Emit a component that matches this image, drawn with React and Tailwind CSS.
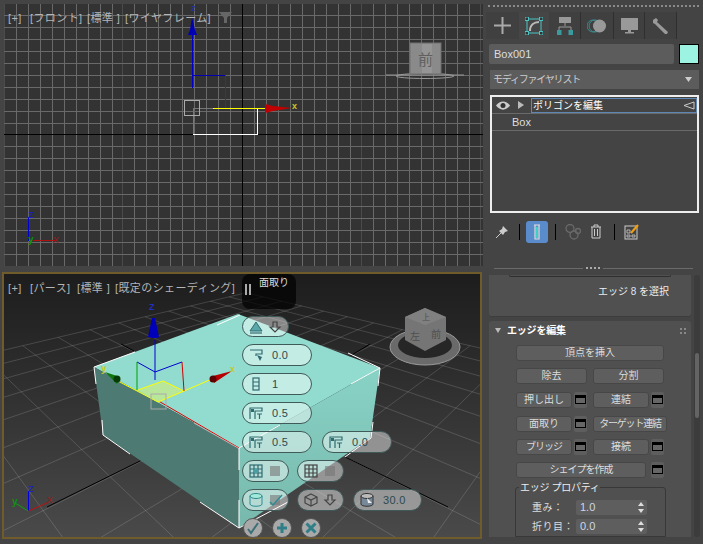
import React from "react";

const CJK = { fontFamily: '"Liberation Sans","Noto Sans CJK JP",sans-serif' };

function Grid() {
  const bases = [4, 122.5, 242, 361, 480];
  const vs = [];
  bases.forEach((b) => {
    for (let j = 0; j < 10; j++) vs.push({ x: Math.floor(b + 12 * j) + 0.5, major: j === 0 });
  });
  const hs = [];
  [15, 134, 254].forEach((b) => {
    for (let j = 0; j < 10; j++) hs.push(b + 12 * j + 0.5);
  });
  return (
    <g shapeRendering="crispEdges">
      {vs.filter((v) => v.x < 484).map((v, i) => (
        <line key={i} x1={v.x} x2={v.x} y1="4" y2="266" stroke={v.major ? "#4b4b4b" : "#696969"} />
      ))}
      {hs.filter((y) => y < 267).map((y, i) => (
        <line key={i} x1="4" x2="484" y1={y} y2={y} stroke="#696969" />
      ))}
      <line x1="242.5" x2="242.5" y1="4" y2="266" stroke="#000" />
      <line x1="4" x2="484" y1="134.5" y2="134.5" stroke="#000" />
    </g>
  );
}

function TopView() {
  return (
    <svg className="block w-full h-full" viewBox="4 4 479 262">
      <Grid />
      <g shapeRendering="crispEdges" fill="none">
        <path d="M193 108H213M193.5 108V134" stroke="#777" />
        <path d="M193 134.5H257.5V108" stroke="#fff" />
        <path d="M213 108.500H265" stroke="#ff0" strokeWidth="1" />
        <path d="M192.500 88V30" stroke="#0000c8" strokeWidth="1" />
        <path d="M193 75.500H225.500" stroke="#0000b0" />
        <path d="M225.500 75V108" stroke="#a01010" />
        <rect x="184.500" y="100.500" width="15" height="15" stroke="#aaa" />
      </g>
      <path d="M192 17L190 30 188 35H197L195 30Z" fill="#0000b4" />
      <text x="191" y="11" fontSize="9" fill="#2030c0" style={CJK}>z</text>
      <path d="M265 104V113L273 111 292 108 273 106Z" fill="#c00000" />
      <text x="292" y="109" fontSize="9" fontWeight="700" fill="#c8c820" style={CJK}>x</text>
      <g>
        <path d="M386 75H464" stroke="#999" strokeWidth="1" />
        <ellipse cx="425" cy="76" rx="29" ry="2.500" fill="none" stroke="#999" />
        <rect x="410" y="43" width="31" height="31" fill="#8a8a8a" stroke="#707070" />
        <rect x="422" y="44" width="10" height="29" fill="#fff" opacity=".1" />
        <text x="425.500" y="65" fontSize="15" textAnchor="middle" fill="#606060" style={CJK}>前</text>
      </g>
      <path d="M28.500 217V240H55" fill="none" stroke="#0000d0" shapeRendering="crispEdges" />
      <path d="M29 240.500H55" stroke="#b01010" shapeRendering="crispEdges" />
      <text x="28" y="218" fontSize="9" fill="#1020d0" style={CJK}>Z</text>
      <text x="53" y="243" fontSize="9" fill="#a01818" style={CJK}>X</text>
      <text x="28" y="243" fontSize="10" fontWeight="700" fill="#109010" style={CJK}>y</text>
    </svg>
  );
}

function perspLines() {
  const O = [247, 408], V1 = [680, 190], V2 = [-190, 190], k = 0.08;
  const P = (u, v) => {
    const w = 1 + u * k + v * k;
    return [
      (O[0] + u * k * V1[0] + v * k * V2[0]) / w,
      (O[1] + u * k * V1[1] + v * k * V2[1]) / w,
    ];
  };
  const out = [];
  const N = 7;
  const L = -5;
  for (let a = L; a <= N; a++) {
    out.push([P(a, L), P(a, N)]);
    out.push([P(L, a), P(N, a)]);
  }
  return out;
}

function PerspView() {
  const wire = "#fff";
  return (
    <svg className="block w-full h-full" viewBox="4 274 476 263">
      <defs>
        <linearGradient id="rf" x1="0" y1="0" x2="0" y2="1">
          <stop offset="0" stopColor="#88d3c6" />
          <stop offset="1" stopColor="#78b8ac" />
        </linearGradient>
      </defs>
      {perspLines().map(([a, b], i) => (
        <line key={i} x1={a[0]} y1={a[1]} x2={b[0]} y2={b[1]} stroke="#fff" strokeOpacity=".17" strokeWidth=".9" />
      ))}
      <path d="M47 507L142 460M347 358L370 344M121 344L134 351M345 457L448 507" stroke="#000" strokeWidth="1" fill="none" />
      <polygon points="94,367 238,314 380,368 239,448" fill="#92dccf" />
      <polygon points="239,448 380,368 370,438 239,528" fill="url(#rf)" />
      <polygon points="94,367 239,448 239,528 103,435" fill="#4d7a72" />
      <path d="M150 396L239 448" stroke="#e00000" strokeWidth="1" fill="none" />
      <path d="M194 423L239 448.500" stroke="#fff" strokeWidth=".8" fill="none" opacity=".7" />
      <g stroke={wire} strokeWidth="1" fill="none">
        <path d="M96 384L94 367L135 352" />
        <path d="M217 325L240 315" />
        <path d="M348 353L380 368L351 384" />
        <path d="M380 368L378 386" />
        <path d="M280 425L239 448" />
        <path d="M239 448V470M239 500V528" />
        <path d="M373 422L371 438L345 457" />
        <path d="M288 502L239 528L200 502" />
        <path d="M102 420L103 435L130 454" />
      </g>
      <path d="M138 390L163 381L184 391L158 402Z" fill="#b8e69a" />
      <g fill="none" strokeWidth="1">
        <path d="M118 381L158 402L184 391L212 379M138 390L163 381L184 391" stroke="#ffff00" />
        <path d="M137 362L155 372L182 362" stroke="#0000d0" />
        <path d="M155 372V340M155 372V380" stroke="#0000d0" />
        <path d="M137 362V390" stroke="#00a000" />
        <path d="M182 362L184 391" stroke="#d00000" />
        <rect x="151" y="394" width="15" height="15" stroke="#aaa" />
      </g>
      <path d="M152 318L148 337L152 338H157L159 337L155 318Z" fill="#0000b8" />
      <text x="149" y="310" fontSize="9" fontWeight="700" fill="#2030c0" style={CJK}>Z</text>
      <path d="M105 372L120 377L117 384Z" fill="#0b7a0b" />
      <circle cx="117" cy="379" r="3.500" fill="#063d06" />
      <text x="101" y="372" fontSize="10" fontWeight="700" fill="#c8c820" style={CJK}>y</text>
      <path d="M232 371L213 376L214 383Z" fill="#b80000" />
      <circle cx="213" cy="379" r="3.500" fill="#5a0000" />
      <text x="230" y="372" fontSize="9" fontWeight="700" fill="#c8c820" style={CJK}>x</text>
      <g>
        <ellipse cx="425" cy="347" rx="35" ry="18" fill="#6a6a6a" stroke="#9a9a9a" />
        <ellipse cx="425" cy="345" rx="27" ry="13" fill="#262626" />
        <path d="M425 308L446 317V340L425 351L405 340V317Z" fill="#757575" />
        <path d="M425 308L446 317L425 325L405 317Z" fill="#808080" />
        <text x="415" y="340" fontSize="10" textAnchor="middle" fill="#4f4f4f" style={CJK}>左</text>
        <text x="436" y="338" fontSize="10" textAnchor="middle" fill="#4f4f4f" style={CJK}>前</text>
        <text x="426" y="320" fontSize="8" textAnchor="middle" fill="#4f4f4f" style={CJK}>上</text>
      </g>
      <path d="M28.500 511V491" stroke="#0000e0" />
      <path d="M28.500 511L15 503" stroke="#10a010" />
      <path d="M28.500 511L47 503" stroke="#c01010" />
      <text x="28" y="492" fontSize="9" fill="#1020d0" style={CJK}>Z</text>
      <text x="12" y="505" fontSize="10" fontWeight="700" fill="#109010" style={CJK}>y</text>
      <text x="47" y="503" fontSize="9" fill="#a01818" style={CJK}>X</text>
    </svg>
  );
}

const T = "#2f6a70";
function CIcon({ kind }) {
  const c = { fill: "none", stroke: T, strokeWidth: 1.2 };
  const map = {
    house: <><path d="M2 12L8 3L14 12Z" fill="#5aa7a9" stroke={T} /><path d="M2 14H14" {...c} /></>,
    arrow: <path d="M6 3H10V8H13L8 13L3 8H6Z" {...c} stroke="#444" />,
    seg: <><path d="M2 3H14V7H8V9" {...c} /><path d="M9 8L14 10L12 14Z" fill={T} /></>,
    bar: <><rect x="5" y="2" width="6" height="12" {...c} /><path d="M5 6H11M5 10H11" {...c} /></>,
    amt: <><path d="M2 14V3H14V6H7V14" {...c} /><rect x="3" y="4" width="3" height="3" fill={T} /><path d="M9 9H14M11.500 9V14" {...c} /></>,
    g1: <><rect x="2" y="2" width="12" height="12" {...c} /><path d="M6 2V14M10 2V14M2 6H14M2 10H14" {...c} /><rect x="6" y="6" width="4" height="4" fill="#48a0a6" /></>,
    g2: <><rect x="2" y="2" width="12" height="12" {...c} stroke="#444" /><path d="M6 2V14M10 2V14M2 6H14M2 10H14" {...c} stroke="#444" /></>,
    square: <rect x="3" y="3" width="10" height="10" fill="#777" opacity=".6" />,
    cyl: <><ellipse cx="8" cy="4" rx="6" ry="2.500" fill="#8fd" fillOpacity=".4" stroke="#2e8a92" /><path d="M2 4V12C2 15 14 15 14 12V4" fill="none" stroke="#2e8a92" /></>,
    check: <><rect x="3" y="3" width="10" height="10" fill="#777" opacity=".6" /><path d="M3 10L6 13L15 3" fill="none" stroke="#2e8a92" strokeWidth="1.500" /></>,
    cube: <><path d="M8 2L14 5V11L8 14L2 11V5Z" {...c} stroke="#444" /><path d="M2 5L8 8L14 5M8 8V14" {...c} stroke="#444" /></>,
    twist: <><path d="M2 4V12C2 15 14 15 14 12V4" fill="#789" stroke="#333" /><ellipse cx="8" cy="4" rx="6" ry="2.500" fill="#bbb" stroke="#333" /><path d="M8 6L13 11L9 11Z" fill="#eee" /></>,
  };
  return <svg width="16" height="16" viewBox="0 0 16 16" className="shrink-0">{map[kind]}</svg>;
}

function Pill({ a, b, text, w }) {
  return (
    <div className={`flex items-center ${w} h-full rounded-[11px] border border-[#3f5a58] bg-white/45 pl-[5px] ${b ? "gap-[3px]" : "gap-[8px]"} text-[11px] tracking-[0.3px] text-[#2c4a50]`} style={CJK}>
      <CIcon kind={a} />
      {b ? <CIcon kind={b} /> : null}
      {text ? <span>{text}</span> : null}
    </div>
  );
}

function Round({ children }) {
  return (
    <div className="w-[20px] h-[20px] rounded-full border border-[#555] bg-[#a9a9a9] flex items-center justify-center">
      <svg width="14" height="14" viewBox="0 0 14 14">{children}</svg>
    </div>
  );
}

function Caddy() {
  return (
    <div className="absolute left-[238px] top-0 flex flex-col gap-[7px]">
      <div className="w-[54px] h-[35px] rounded-lg bg-black/70 flex items-start pl-[3px] pt-[2px] gap-[3px]">
        <div className="flex gap-[2px] mt-[8px]">
          <div className="w-[2px] h-[11px] bg-[#aaa]" />
          <div className="w-[2px] h-[11px] bg-[#aaa]" />
        </div>
        <span className="text-[10px] leading-[14px] text-[#ddd] ml-[5px] whitespace-nowrap" style={CJK}>面取り</span>
      </div>
      <div className="h-[21px]"><Pill a="house" b="arrow" w="w-[47px]" /></div>
      <div className="h-[22px]"><Pill a="seg" text="0.0" w="w-[70px]" /></div>
      <div className="h-[22px]"><Pill a="bar" text="1" w="w-[70px]" /></div>
      <div className="h-[22px]"><Pill a="amt" text="0.5" w="w-[70px]" /></div>
      <div className="h-[22px] flex gap-[10px]">
        <Pill a="amt" text="0.5" w="w-[70px]" />
        <Pill a="amt" text="0.0" w="w-[70px]" />
      </div>
      <div className="h-[22px] flex gap-[8px]">
        <Pill a="g1" b="square" w="w-[47px]" />
        <Pill a="g2" b="square" w="w-[47px]" />
      </div>
      <div className="h-[22px] flex gap-[8px]">
        <Pill a="cyl" b="check" w="w-[47px]" />
        <Pill a="cube" b="arrow" w="w-[47px]" />
        <div className="ml-[1px] h-full"><Pill a="twist" text="30.0" w="w-[69px]" /></div>
      </div>
      <div className="flex gap-[9px] pl-[1px]">
        <Round><path d="M2 8L5 12L12 2" fill="none" stroke="#3b7078" strokeWidth="2" /></Round>
        <Round><path d="M7 2V12M2 7H12" stroke="#2f7f88" strokeWidth="3" /></Round>
        <Round><path d="M2.500 2.500L11.500 11.500M11.500 2.500L2.500 11.500" stroke="#2f7f88" strokeWidth="3" /></Round>
      </div>
    </div>
  );
}

function Tab({ w, active, sep, children }) {
  return (
    <div className={`${w} h-full flex items-center justify-center ${active ? "bg-[#464646]" : "bg-[#404040]"} ${sep ? "border-r border-[#2f2f2f]" : ""}`}>
      {children}
    </div>
  );
}

function Btn({ w, children }) {
  return (
    <div className={`${w} h-[16px] rounded-[3px] bg-[#5e5e5e] border border-[#474747] flex items-center justify-center text-[10px] whitespace-nowrap text-[#dcdcdc]`}>
      {children}
    </div>
  );
}

function Settings({ ml = "ml-[2px]" }) {
  return (
    <div className={`${ml} w-[13px] h-[16px] rounded-[2px] bg-[#5e5e5e] flex items-center justify-center`}>
      <div className="w-[11px] h-[9px] border border-black border-t-[3px] bg-[#666]" />
    </div>
  );
}

function Row({ mt = "", children }) {
  return <div className={`flex ml-[27px] h-[16px] ${mt}`}>{children}</div>;
}

function Spin({ v }) {
  return (
    <div className="w-[71px] h-[15px] rounded-[2px] bg-[#5e5e5e] flex items-center justify-between pl-[4px] pr-[3px] text-[11px] text-[#cfd6e4]">
      <span>{v}</span>
      <svg width="6" height="11" viewBox="0 0 6 11"><path d="M3 0L6 4H0ZM3 11L0 7H6Z" fill="#ddd" /></svg>
    </div>
  );
}

function RightPanel() {
  return (
    <div className="w-[219px] h-full flex flex-col text-[#ddd]" style={CJK}>
      <div className="mt-[5px] mx-[4px] border-t-2 border-dotted border-[#8a8a8a]" />
      <div className="mt-[5px] ml-[2px] h-[27px] flex">
        <Tab w="w-[33px]">
          <svg width="17" height="17" viewBox="0 0 17 17"><path d="M8.500 0V17M0 8.500H17" stroke="#aaa" strokeWidth="2" /></svg>
        </Tab>
        <Tab w="w-[30px]" active>
          <svg width="18" height="18" viewBox="0 0 18 18" fill="none">
            <rect x="2" y="2" width="14" height="14" stroke="#4cc4c4" />
            <path d="M5 14C5 8 9 5 14 5" stroke="#bbb" strokeWidth="2" />
            <rect x="0" y="0" width="3.500" height="3.500" fill="#333" stroke="#4cc4c4" />
            <rect x="14.500" y="0" width="3.500" height="3.500" fill="#333" stroke="#4cc4c4" />
            <rect x="0" y="14.500" width="3.500" height="3.500" fill="#333" stroke="#4cc4c4" />
            <rect x="14.500" y="14.500" width="3.500" height="3.500" fill="#333" stroke="#4cc4c4" />
          </svg>
        </Tab>
        <Tab w="w-[32px]" sep>
          <svg width="16" height="18" viewBox="0 0 16 18" fill="none">
            <rect x="2" y="0" width="12" height="6" fill="#999" />
            <path d="M8 6V9M2 14V10H14V14" stroke="#999" />
            <rect x="0" y="13" width="4.500" height="5" fill="#3b9a9e" />
            <rect x="11.500" y="13" width="4.500" height="5" fill="#3b9a9e" />
          </svg>
        </Tab>
        <Tab w="w-[33px]" sep>
          <svg width="20" height="14" viewBox="0 0 20 14">
            <circle cx="6" cy="7" r="6" fill="none" stroke="#3b8a8e" />
            <circle cx="8" cy="7" r="6" fill="none" stroke="#3b8a8e" />
            <circle cx="12.500" cy="7" r="6.500" fill="#999" />
          </svg>
        </Tab>
        <Tab w="w-[31px]" sep>
          <svg width="17" height="16" viewBox="0 0 17 16">
            <rect x="0" y="0" width="17" height="12" fill="#999" />
            <rect x="7" y="12" width="3" height="2" fill="#999" />
            <rect x="4" y="14" width="9" height="1.500" fill="#999" />
          </svg>
        </Tab>
        <Tab w="w-[32px]" sep>
          <svg width="18" height="18" viewBox="0 0 18 18">
            <path d="M1 3L4 1L6 3L5 5L16 15L15 17L13 17L3 7L1 6Z" fill="#999" />
          </svg>
        </Tab>
      </div>

      <div className="mt-[5px] ml-[5px] flex h-[20px]">
        <div className="w-[185px] h-full bg-[#5c5c5c] rounded-[2px] flex items-center pl-[5px] text-[11px]">Box001</div>
        <div className="ml-[5px] w-[20px] h-full bg-[#9df3e2] border border-black" />
      </div>

      <div className="mt-[6px] ml-[6px] w-[209px] h-[19px] bg-[#5c5c5c] flex items-center justify-between pl-[3px] pr-[7px] text-[10px] text-[#ccc]">
        <span className="tracking-[-1.200px]">モディファイヤリスト</span>
        <svg width="7" height="5" viewBox="0 0 7 5"><path d="M0 0H7L3.500 5Z" fill="#ccc" /></svg>
      </div>

      <div className="mt-[6px] ml-[6px] w-[209px] h-[118px] border-2 border-[#eee] bg-[#444] text-[10px]">
        <div className="h-[17px] flex items-center border-b border-[#6a6a6a]">
          <svg className="ml-[4px]" width="14" height="9" viewBox="0 0 14 9">
            <path d="M0 4.500C4 -1 10 -1 14 4.500C10 10 4 10 0 4.500Z" fill="#ccc" />
            <circle cx="7" cy="4.500" r="2.500" fill="#333" />
          </svg>
          <svg className="ml-[8px]" width="6" height="8" viewBox="0 0 6 8"><path d="M0 0L6 4L0 8Z" fill="#bbb" /></svg>
          <div className="ml-[7px] w-[166px] h-[15px] border border-[#5f86b5] flex items-center justify-between px-[1px] text-white">
            <span>ポリゴンを編集</span>
            <svg width="12" height="9" viewBox="0 0 12 9" fill="none"><path d="M1 4.500L11 1V8Z" stroke="#ccc" /></svg>
          </div>
        </div>
        <div className="h-[17px] flex items-center border-b border-[#6a6a6a] pl-[20px] text-[11px]">Box</div>
      </div>

      <div className="mt-[7px] ml-[11px] h-[23px] flex items-center">
        <svg width="14" height="14" viewBox="0 0 14 14">
          <path d="M1 13L6 8" stroke="#ccc" />
          <path d="M8 1L13 6L10 7L8 10L4 6L7 4Z" fill="#ccc" />
        </svg>
        <div className="ml-[10px] w-px h-[16px] bg-black" />
        <div className="ml-[6px] w-[22px] h-[22px] rounded-[3px] bg-[#5a8ccb] flex items-center justify-center">
          <svg width="8" height="16" viewBox="0 0 8 16" fill="none">
            <path d="M1 1H7M2 1V15H6V1" stroke="#ddd" strokeWidth="1.200" />
            <rect x="3" y="3" width="2" height="11" fill="#3fcfc4" />
          </svg>
        </div>
        <div className="ml-[7px] w-px h-[16px] bg-black" />
        <svg className="ml-[9px]" width="16" height="16" viewBox="0 0 16 16" fill="none" stroke="#6a6a6a" strokeWidth="1.300">
          <circle cx="5" cy="4.500" r="4" />
          <circle cx="9" cy="11" r="4" />
          <circle cx="13" cy="7" r="2.500" />
        </svg>
        <svg className="ml-[9px]" width="12" height="15" viewBox="0 0 12 15" fill="none" stroke="#ccc">
          <path d="M1 3H11M4 3V1H8V3M2 3V14H10V3M4.500 5V12M7.500 5V12" />
        </svg>
        <div className="ml-[12px] w-px h-[16px] bg-black" />
        <svg className="ml-[9px]" width="15" height="16" viewBox="0 0 15 16" fill="none">
          <rect x="1" y="2" width="12" height="13" stroke="#ccc" />
          <path d="M3 6H6V9H3ZM3 11H6V13H3ZM8 11H11V13H8Z" stroke="#ccc" strokeWidth=".8" />
          <path d="M7 9L14 1" stroke="#f0a010" strokeWidth="2" />
        </svg>
      </div>

      <div className="mt-[20px] ml-[10px] flex items-center h-[10px]">
        <div className="w-[89px] h-px bg-[#6a6a6a]" />
        <div className="ml-[3px] w-[14px] border-t-2 border-dotted border-[#aaa]" />
        <div className="ml-[3px] w-[90px] h-px bg-[#6a6a6a]" />
      </div>

      <div className="mt-[2px] flex flex-1 min-h-0">
        <div className="ml-[5px] w-[202px] flex flex-col gap-[4px]">
          <div className="h-[42px] rounded-b-[3px] bg-[#505050] border-b border-[#3d3d3d] relative">
            <div className="mx-[20px] h-[2px] rounded-b-sm border-b border-x border-[#2f2f2f]" />
            <div className="mt-[7px] pl-[109px] text-[10px] leading-[16px] text-[#eee] whitespace-nowrap">
              エッジ <span className="text-[#dce6f7]">8</span> を選択
            </div>
          </div>
          <div className="h-[216px] rounded-t-[3px] bg-[#505050] flex flex-col overflow-hidden">
            <div className="h-[19px] flex items-center pl-[6px] pr-[5px] mb-[6px] mt-[2px]">
              <svg width="6" height="5" viewBox="0 0 6 5"><path d="M0 0H6L3 5Z" fill="#bbb" /></svg>
              <span className="ml-[6px] text-[10px] font-bold text-white tracking-[-0.2px]">エッジを編集</span>
              <div className="ml-auto w-[6px] h-[6px] border-y-2 border-dotted border-[#888]" />
            </div>
            <div className="flex flex-col gap-[7px]">
              <Row><Btn w="w-[148px]">頂点を挿入</Btn></Row>
              <Row><Btn w="w-[71px]">除去</Btn><div className="w-[6px]" /><Btn w="w-[71px]">分割</Btn></Row>
              <Row mt="mt-px"><Btn w="w-[56px]">押し出し</Btn><Settings /><div className="w-[6px]" /><Btn w="w-[56px]">連結</Btn><Settings /></Row>
              <Row mt="mt-px"><Btn w="w-[56px]">面取り</Btn><Settings /><div className="w-[6px]" /><Btn w="w-[74px] tracking-[-1.200px]">ターゲット連結</Btn></Row>
              <Row><Btn w="w-[56px] tracking-[-1px]">ブリッジ</Btn><Settings /><div className="w-[6px]" /><Btn w="w-[56px]">接続</Btn><Settings /></Row>
              <Row><Btn w="w-[130px] tracking-[-1px]">シェイプを作成</Btn><Settings ml="ml-[5px]" /></Row>
            </div>
            <div className="mt-[9px] ml-[26px] w-[151px] h-[60px] border border-[#383838] rounded-t-[3px] relative">
              <span className="absolute -top-[7px] left-[3px] bg-[#505050] px-[1px] text-[10px] leading-[13px] text-[#eee] tracking-[-0.3px] whitespace-nowrap">エッジ プロパティ</span>
              <div className="mt-[12px] flex items-center pl-[16px]">
                <span className="w-[44px] text-[10px] tracking-[0.500px]">重み：</span><Spin v="1.0" />
              </div>
              <div className="mt-[4px] flex items-center pl-[16px]">
                <span className="w-[44px] text-[10px] tracking-[0.500px]">折り目：</span><Spin v="0.0" />
              </div>
            </div>
          </div>
        </div>
        <div className="ml-[3px] w-[6px] h-[262px] bg-[#3c3c3c] rounded-[3px] pt-[78px]">
          <div className="mx-auto w-[4px] h-[65px] bg-[#646464] rounded-[2px]" />
        </div>
      </div>
    </div>
  );
}

function Label({ items }) {
  return (
    <div className="absolute left-[4px] top-[7px] flex text-[11px] leading-[14px] tracking-[0.4px] text-[#b5b5b5] whitespace-nowrap" style={CJK}>
      {items.map(([t, w], i) => (
        <span key={i} className={w}>{t}</span>
      ))}
    </div>
  );
}

export default function App() {
  return (
    <div className="w-[703px] h-[544px] bg-[#444] flex overflow-hidden">
      <div className="w-[484px] h-full flex flex-col">
        <div className="relative mt-[4px] ml-[4px] w-[479px] h-[262px] bg-[#333]">
          <TopView />
          <Label items={[["[+]", "w-[22px]"], ["[フロント]", "w-[57px]"], ["[標準 ]", "w-[38px]"], ["[ワイヤフレーム]", ""]]} />
          <svg className="absolute left-[215px] top-[8px]" width="13" height="11" viewBox="0 0 13 11">
            <path d="M0 0H13L8 6V11H5V6Z" fill="#666" />
          </svg>
        </div>
        <div className="relative mt-[6px] ml-[2px] w-[480px] h-[267px] border-2 border-[#6f5c2a] bg-linear-to-b from-[#1d1d1d] to-[#4a4a4a]">
          <PerspView />
          <Label items={[["[+]", "w-[22px]"], ["[パース]", "w-[47px]"], ["[標準 ]", "w-[38px]"], ["[既定のシェーディング]", ""]]} />
          <Caddy />
        </div>
      </div>
      <RightPanel />
    </div>
  );
}
